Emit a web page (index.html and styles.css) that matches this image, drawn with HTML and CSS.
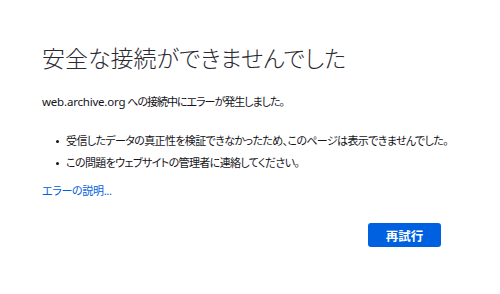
FILE: index.html
```html
<!DOCTYPE html>
<html lang="ja">
<head>
<meta charset="utf-8">
<title>安全な接続ができませんでした</title>
<link rel="stylesheet" href="styles.css">
</head>
<body>
<main class="page">
  <h1 class="title">安全な接続ができませんでした</h1>
  <p class="intro"><span class="host">web.archive.org</span> への接続中にエラーが発生しました。</p>
  <ul class="list">
    <li class="item">受信したデータの真正性を検証できなかったため、このページは表示できませんでした。</li>
    <li class="item">この問題をウェブサイトの管理者に連絡してください。</li>
  </ul>
  <a class="link" href="#">エラーの説明...</a>
  <div class="actions">
    <button class="retry" type="button">再試行</button>
  </div>
</main>
</body>
</html>
```
FILE: styles.css
```css
html, body {
  margin: 0;
  padding: 0;
  background: #ffffff;
}
body {
  font-family: "Noto Sans", "Noto Sans CJK JP", sans-serif;
  color: #15141a;
  font-feature-settings: "palt";
}
.page {
  width: 440px;
  padding: 40px 0 0 42px;
  display: flex;
  flex-direction: column;
}
.title {
  margin: 0;
  font-size: 23px;
  font-weight: 300;
  line-height: 36px;
  color: #2b2a33;
}
.intro {
  margin: 18px 0 0;
  font-size: 11px;
  line-height: 16px;
  letter-spacing: -1px;
}
.host {
  font-size: 11.5px;
  letter-spacing: -0.2px;
}
.list {
  margin: 20px 0 0;
  padding: 0;
  list-style: none;
  font-size: 11px;
  line-height: 22px;
  letter-spacing: -0.62px;
}
.item {
  display: flex;
  align-items: center;
  white-space: nowrap;
}
.item::before {
  content: "";
  width: 3px;
  height: 3px;
  border-radius: 50%;
  background: #15141a;
  margin: 1px 7px 0 14px;
  flex: none;
}
.link {
  margin-top: 9px;
  font-size: 11px;
  line-height: 16px;
  letter-spacing: -0.3px;
  color: #0061e0;
  text-decoration: none;
  align-self: flex-start;
}
.actions {
  display: flex;
  justify-content: flex-end;
  margin-top: 24px;
  padding-right: 41px;
}
.retry {
  width: 73px;
  height: 24px;
  border: none;
  border-radius: 3px;
  background: #0061e0;
  color: #ffffff;
  font-family: "Noto Sans CJK JP", sans-serif;
  font-size: 12.5px;
  font-weight: 700;
  padding: 0;
}
```
